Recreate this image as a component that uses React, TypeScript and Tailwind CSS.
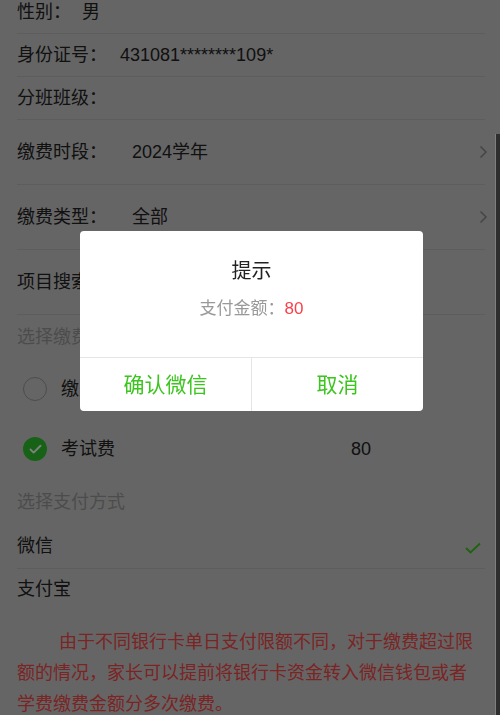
import { Check } from 'lucide-react'

const infoRows = [
  { label: '性别：', value: '男', gap: 'ml-[11px]' },
  { label: '身份证号：', value: '431081********109*', gap: 'ml-[13px]' },
  { label: '分班班级：', value: '', gap: 'ml-[13px]' },
]

const selectRows = [
  { label: '缴费时段：', value: '2024学年', arrow: true },
  { label: '缴费类型：', value: '全部', arrow: true },
  { label: '项目搜索：', value: '', arrow: false },
]

function Chevron() {
  return (
    <svg width="9" height="14" viewBox="0 0 9 14" className="-mr-[3px]">
      <polyline points="1.5,1.5 7,7 1.5,12.5" fill="none" stroke="#8c8c8c" strokeWidth="1.6" />
    </svg>
  )
}

export default function App() {
  return (
    <div className="relative min-h-screen h-[715px] overflow-hidden bg-[#cbcbcb] flex font-['Liberation_Sans','Noto_Sans_CJK_SC',sans-serif] text-[18px] text-[#222]">
      <div className="flex-1 min-w-0 pl-[17px] pr-[10px] -mt-[9px]">
        {infoRows.map((row) => (
          <div key={row.label} className="h-[42px] flex items-center border-b border-[#bbb] box-content">
            <span>{row.label}</span>
            {row.value && <span className={row.gap}>{row.value}</span>}
          </div>
        ))}

        {selectRows.map((row) => (
          <div key={row.label} className="h-[64px] flex items-center border-b border-[#bbb] box-content">
            <span className="w-[115px] shrink-0">{row.label}</span>
            <span className="flex-1">{row.value}</span>
            {row.arrow && <Chevron />}
          </div>
        ))}

        <div className="h-[44px] flex items-center text-[#999]">选择缴费项目</div>

        <div className="h-[60px] flex items-center">
          <span className="ml-[6px] w-[24px] h-[24px] rounded-full border border-[#999]" />
          <span className="ml-[14px] w-[290px]">缴费项目</span>
          <span></span>
        </div>
        <div className="h-[60px] flex items-center">
          <span className="ml-[6px] w-[24px] h-[24px] rounded-full bg-[#2ec42e] flex items-center justify-center">
            <Check size={15} strokeWidth={3} className="text-white" />
          </span>
          <span className="ml-[14px] w-[290px]">考试费</span>
          <span>80</span>
        </div>

        <div className="h-[46px] flex items-center text-[#999]">选择支付方式</div>

        <div className="h-[43px] flex items-center justify-between border-b border-[#bbb] box-content">
          <span>微信</span>
          <svg width="16" height="12" viewBox="0 0 16 12" className="mr-[4px] mt-[3px]">
            <polyline points="1,6 5.5,10.5 15,1.5" fill="none" stroke="#3cc51f" strokeWidth="1.8" />
          </svg>
        </div>
        <div className="h-[41px] flex items-center">支付宝</div>

        <p className="mt-[17px] pr-[4px] indent-[42px] leading-[31px] text-[#f44848]">
          由于不同银行卡单日支付限额不同，对于缴费超过限额的情况，家长可以提前将银行卡资金转入微信钱包或者学费缴费金额分多次缴费。
        </p>
      </div>

      <div className="w-[5px] mt-[134px] bg-[#5c5c5c] border-l border-white" />

      <div className="fixed inset-0 bg-black/50 flex items-start justify-center pt-[231px] pl-[3px]">
        <div className="w-[343px] bg-white rounded-[4px] overflow-hidden">
          <div className="pt-[26px] pb-[37px] flex flex-col items-center">
            <div className="text-[20px] leading-[28px] text-[#222]">提示</div>
            <div className="mt-[13px] text-[17px] leading-[22px] text-[#999]">
              支付金额：<span className="text-[#fa3e4a]">80</span>
            </div>
          </div>
          <div className="flex h-[54px] border-t border-[#e5e5e5] text-[21px] text-[#3cc51f]">
            <button className="flex-1 flex items-center justify-center border-r border-[#e5e5e5]">确认微信</button>
            <button className="flex-1 flex items-center justify-center">取消</button>
          </div>
        </div>
      </div>
    </div>
  )
}
